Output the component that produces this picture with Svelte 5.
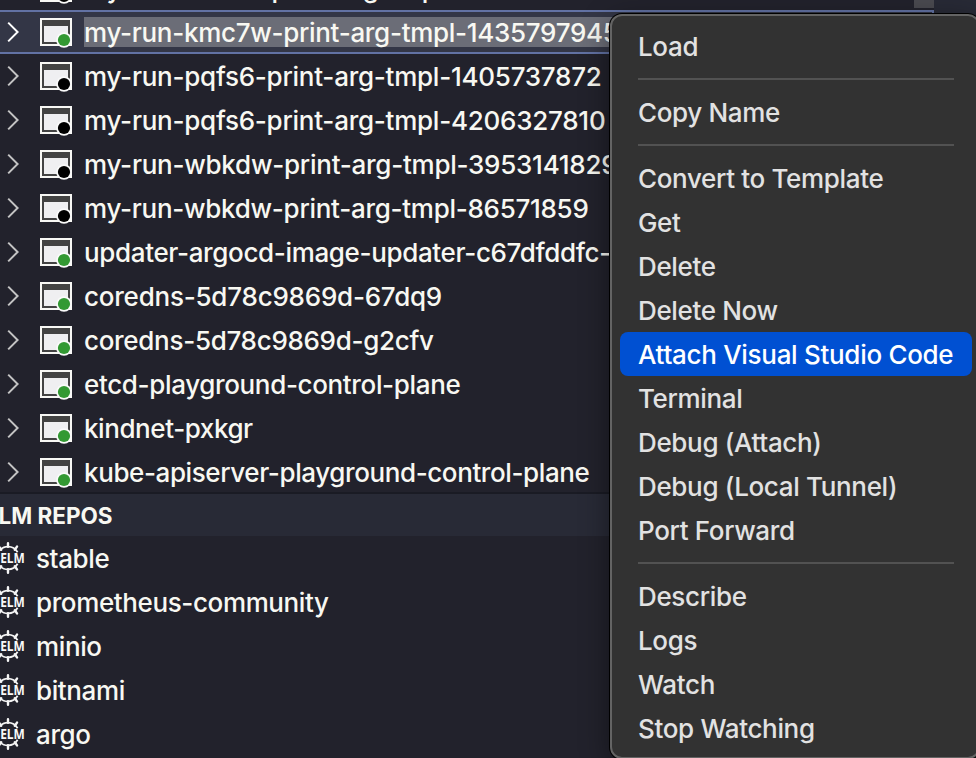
<script>
  const pods = [
    { name: 'my-run-h5s6z-print-arg-tmpl-2047738461', state: 'done', ls: -0.25 },
    { name: 'my-run-kmc7w-print-arg-tmpl-1435797945', state: 'ok', selected: true, ls: -0.3 },
    { name: 'my-run-pqfs6-print-arg-tmpl-1405737872', state: 'done', ls: -0.25 },
    { name: 'my-run-pqfs6-print-arg-tmpl-4206327810', state: 'done', ls: -0.25 },
    { name: 'my-run-wbkdw-print-arg-tmpl-3953141829', state: 'done', ls: -0.25 },
    { name: 'my-run-wbkdw-print-arg-tmpl-86571859', state: 'done', ls: -0.28 },
    { name: 'updater-argocd-image-updater-c67dfddfc-x7', state: 'ok', ls: -0.35 },
    { name: 'coredns-5d78c9869d-67dq9', state: 'ok', ls: -0.22 },
    { name: 'coredns-5d78c9869d-g2cfv', state: 'ok', ls: -0.3 },
    { name: 'etcd-playground-control-plane', state: 'ok', ls: -0.35 },
    { name: 'kindnet-pxkgr', state: 'ok', ls: -0.42 },
    { name: 'kube-apiserver-playground-control-plane', state: 'ok', ls: -0.4 }
  ];
  const repos = ['stable', 'prometheus-community', 'minio', 'bitnami', 'argo'];
  const groups = [
    ['Load'],
    ['Copy Name'],
    ['Convert to Template', 'Get', 'Delete', 'Delete Now', 'Attach Visual Studio Code', 'Terminal', 'Debug (Attach)', 'Debug (Local Tunnel)', 'Port Forward'],
    ['Describe', 'Logs', 'Watch', 'Stop Watching']
  ];
  const active = 'Attach Visual Studio Code';
</script>

<main class="window">
  <section class="sidebar">
    <div class="tree">
      {#each pods as pod}
        <div class="row" class:selected={pod.selected}>
          <svg class="chevron" width="12" height="22" viewBox="0 0 12 22"><path d="M1.2 1.6 10.6 11 1.2 20.4" /></svg>
          <svg class="pod" width="34" height="32" viewBox="0 0 34 32">
            <rect width="32" height="28" fill="#f8f8f5" />
            <rect x="2" y="2" width="28" height="24" fill="#434343" />
            <rect x="4" y="8" width="24" height="16" fill="#efeff1" />
            <circle cx="24" cy="22" r="7.8" fill="#fafafa" />
            <circle cx="24" cy="22" r="6.1" fill={pod.state === 'ok' ? '#339933' : '#000'} />
          </svg>
          <span class="name" style:letter-spacing="{pod.ls}px">{pod.name}</span>
        </div>
      {/each}
    </div>
    <header>HELM REPOS</header>
    <div class="repos">
      {#each repos as repo}
        <div class="repo">
          <svg class="helm" width="34" height="32" viewBox="-9 0 34 32">
            <g fill="none" stroke="#f5f5f5" stroke-width="1.8">
              <path d="M-1.6 10.2A11 11 0 0 1 17.6 10.2M-1.6 21.8A11 11 0 0 0 17.6 21.8" />
              <path stroke-width="2.4" stroke-linecap="round" d="M8 1.2v3.5M8 30.8v-3.5M17 4.6l-2.2 3.2M17 27.4l-2.2-3.2M-1 4.6l2.2 3.2M-1 27.4l2.2-3.2" />
            </g>
            <text x="-9" y="20.5" textLength="33.8" lengthAdjust="spacingAndGlyphs">HELM</text>
          </svg>
          <span class="label">{repo}</span>
        </div>
      {/each}
    </div>
  </section>
  <aside class="gutter"><i class="thumb"></i></aside>
  <nav class="menu">
    {#each groups as group, i}
      {#if i > 0}<hr />{/if}
      {#each group as item}
        <div class="item" class:active={item === active}>{item}</div>
      {/each}
    {/each}
  </nav>
</main>

<style>
  .window {
    position: relative;
    display: flex;
    width: 976px;
    height: 758px;
    overflow: hidden;
    background: #22222c;
    color: #f8f8f2;
    font: 450 26px/44px Inter, sans-serif;
    white-space: nowrap;
  }
  .sidebar { width: 934px; flex: none; }
  .tree { margin-top: -34px; }
  .row {
    box-sizing: border-box;
    height: 44px;
    display: flex;
    align-items: center;
    padding-left: 7px;
  }
  .selected { background: #333646; border: 2px solid #6272a4; border-left: 0; }
  .chevron { flex: none; fill: none; stroke: #c4c4c4; stroke-width: 2; }
  .selected .chevron { stroke: #fff; }
  .pod { flex: none; margin: 4px 10px 0 21px; }
  .name { line-height: 30px; padding-top: 1px; margin-top: 1px; }
  .selected .name { background: #6b6d77; line-height: 29px; margin-top: 0; }
  header {
    box-sizing: border-box;
    height: 44px;
    margin-top: -2px;
    border-top: 2px solid #1a1b24;
    background: #282a36;
    font-size: 22.5px;
    font-weight: 700;
    line-height: 43px;
    text-indent: -32px;
  }
  .repos { padding-top: 1px; }
  .repo { display: flex; align-items: center; height: 44px; letter-spacing: -0.38px; }
  .helm { flex: none; margin: -3px 11px 0 -9px; letter-spacing: 0; }
  .helm text { font: 700 13.5px "Open Sans", sans-serif; fill: #f8f8f8; }
  .gutter { flex: 1; background: #282a36; position: relative; }
  .thumb { position: absolute; left: -20px; top: 0; width: 20px; height: 8px; background: #4a4a50; }
  .menu {
    position: absolute;
    left: 610px;
    top: 14px;
    box-sizing: border-box;
    width: 370px;
    height: 745px;
    padding: 8px 6px 8px 8px;
    border: 2px solid #646464;
    border-radius: 12px;
    background: #323232;
    box-shadow: 0 0 0 1px #000, 0 8px 30px rgba(0, 0, 0, .45);
    color: #e2e2e2;
  }
  .item { height: 44px; line-height: 46px; padding-left: 18px; border-radius: 8px; letter-spacing: -0.34px; }
  .active { background: #0050d2; color: #fff; letter-spacing: -0.3px; }
  hr { height: 2px; margin: 10px 18px; border: 0; background: #525252; }
</style>
